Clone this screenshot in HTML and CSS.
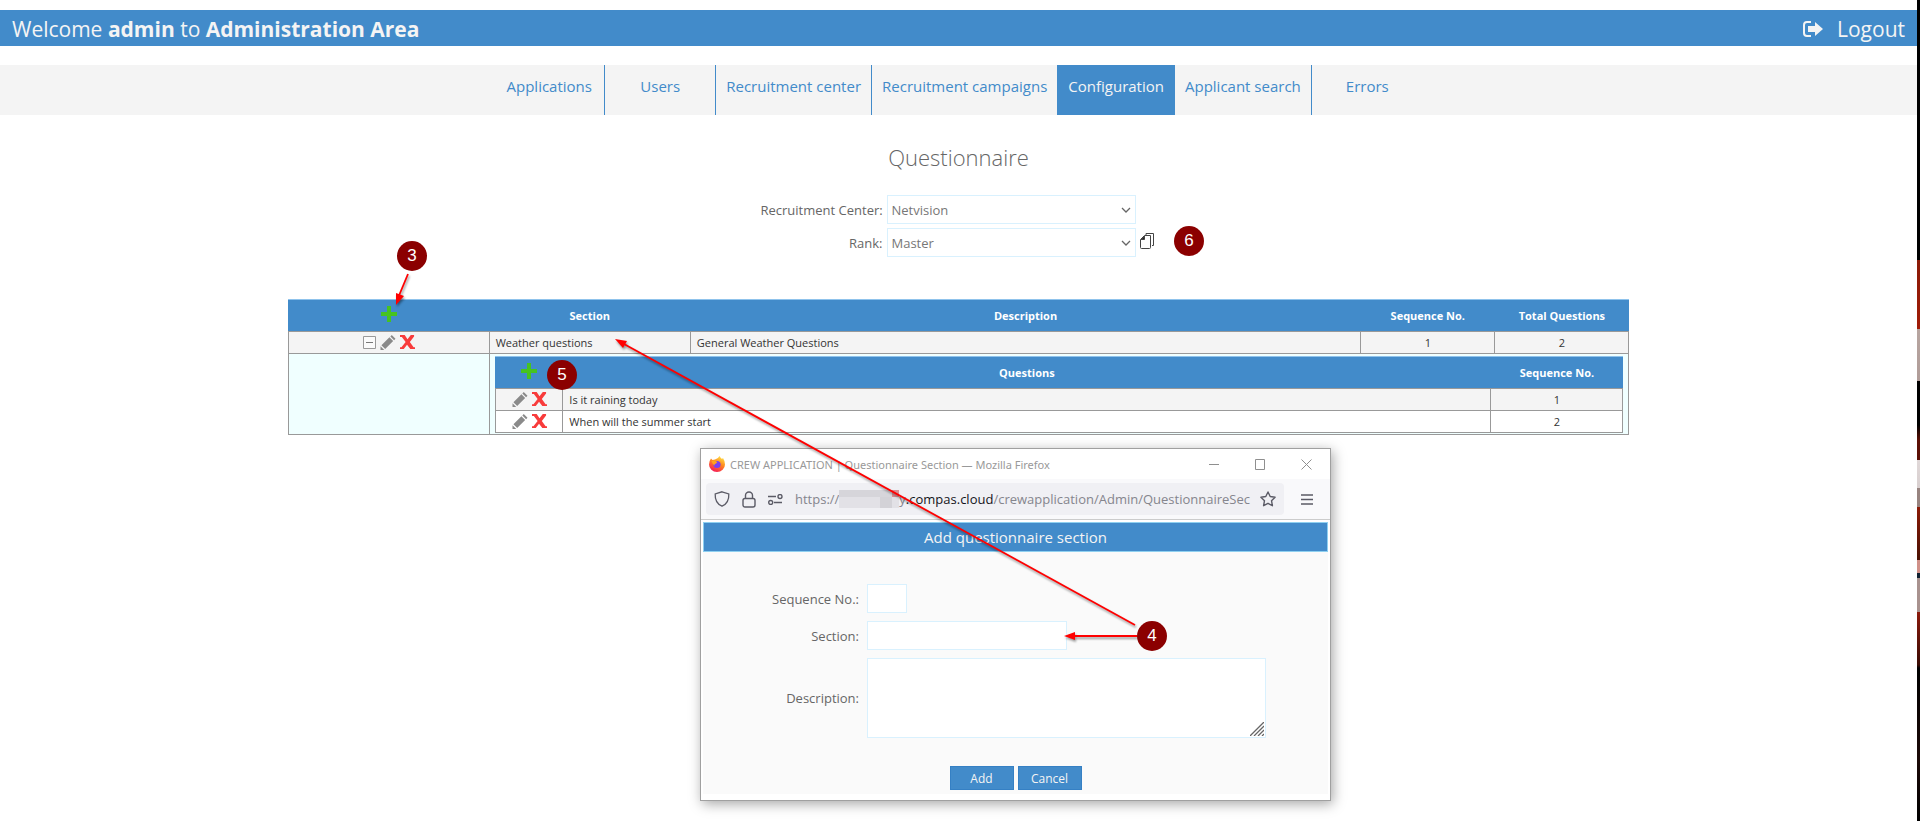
FILE: index.html
```html
<!DOCTYPE html>
<html lang="en">
<head>
    <meta charset="UTF-8">
    <meta name="viewport" content="width=device-width, initial-scale=1.0">
    <title>Questionnaire</title>
    <link rel="stylesheet" href="styles.css">
</head>
<body>
    <svg class="sprite" aria-hidden="true">
        <symbol id="plus" viewBox="0 0 16 16"><path d="M6 0h4v6h6v4h-6v6H6v-6H0V6h6z" fill="#46c320"/></symbol>
        <symbol id="pencil" viewBox="0 0 16 16"><path d="M0 16v-4l4 4zM1 11L9.500 2.500l4 4L5 15zM10.500 1.500L12 0l4 4-1.500 1.500z" fill="#8a8a8a"/></symbol>
        <symbol id="cross" viewBox="0 0 16 16"><path d="M0 0h5l3 4.500L11.500 0H15v1.500L10.500 7.500l4 5.500H16v2h-5L7.500 10.500 4 15H0v-2h1.500L6 7.500 2 2H0z" fill="#f83b3b"/></symbol>
        <symbol id="chevron" viewBox="0 0 10 6"><path d="M1 1l4 4 4-4" fill="none" stroke="#666" stroke-width="1.300"/></symbol>
    </svg>

    <div class="page">
        <header class="topbar">
            <div>Welcome <b>admin</b> to <b>Administration Area</b></div>
            <a class="logout" href="#">
                <svg width="20" height="16" viewBox="0 0 20 16"><path d="M8 1H4Q1 1 1 4v8q0 3 3 3h4" fill="none" stroke="#f4f4f4" stroke-width="2"/><path d="M5 5h7V1l8 7-8 7v-4H5z" fill="#f4f4f4"/></svg>
                Logout
            </a>
        </header>

        <nav class="menu">
            <a href="#">Applications</a>
            <a href="#">Users</a>
            <a href="#">Recruitment center</a>
            <a href="#">Recruitment campaigns</a>
            <a href="#" class="active">Configuration</a>
            <a href="#">Applicant search</a>
            <a href="#">Errors</a>
        </nav>

        <h1>Questionnaire</h1>

        <form class="filter">
            <label for="center">Recruitment Center:</label>
            <div class="select">
                <select id="center"><option>Netvision</option></select>
                <svg width="10" height="6"><use href="#chevron"/></svg>
            </div>
            <span></span>
            <label for="rank">Rank:</label>
            <div class="select">
                <select id="rank"><option>Master</option></select>
                <svg width="10" height="6"><use href="#chevron"/></svg>
            </div>
            <button type="button" class="icon copy" aria-label="Copy">
                <svg width="15" height="17" viewBox="0 0 15 17" fill="none" stroke="#444"><path d="M4.500 3.500h6v12q0 1-1 1h-8q-1 0-1-1v-8z"/><path d="M1 7.500L4.500 4v3.500z" fill="#222"/><path d="M6 3.500V1.500h7.500v12H12"/></svg>
            </button>
        </form>

        <table class="grid sections">
            <colgroup><col class="w15"><col class="w15"><col class="w50"><col class="w10"><col class="w10"></colgroup>
            <thead>
                <tr>
                    <th><button class="icon" aria-label="Add section"><svg width="16" height="16"><use href="#plus"/></svg></button></th>
                    <th>Section</th>
                    <th>Description</th>
                    <th>Sequence No.</th>
                    <th>Total Questions</th>
                </tr>
            </thead>
            <tbody>
                <tr class="odd">
                    <td>
                        <div class="actions">
                            <button class="icon" aria-label="Collapse"><svg width="13" height="13" fill="none"><path d="M.5.5h12v12H.5z" stroke="#999" fill="#fafafa"/><path d="M3 6.500h7" stroke="#777"/></svg></button>
                            <button class="icon" aria-label="Edit"><svg width="16" height="15"><use href="#pencil"/></svg></button>
                            <button class="icon" aria-label="Delete"><svg width="15" height="15"><use href="#cross"/></svg></button>
                        </div>
                    </td>
                    <td>Weather questions</td>
                    <td>General Weather Questions</td>
                    <td class="num">1</td>
                    <td class="num">2</td>
                </tr>
                <tr class="detail">
                    <td></td>
                    <td colspan="4" class="holder">
                        <table class="grid questions">
                            <colgroup><col class="w6"><col><col class="w12"></colgroup>
                            <thead>
                                <tr>
                                    <th><button class="icon" aria-label="Add question"><svg width="16" height="16"><use href="#plus"/></svg></button></th>
                                    <th>Questions</th>
                                    <th>Sequence No.</th>
                                </tr>
                            </thead>
                            <tbody>
                                <tr class="odd">
                                    <td>
                                        <div class="actions">
                                            <button class="icon" aria-label="Edit"><svg width="16" height="15"><use href="#pencil"/></svg></button>
                                            <button class="icon" aria-label="Delete"><svg width="15" height="15"><use href="#cross"/></svg></button>
                                        </div>
                                    </td>
                                    <td>Is it raining today</td>
                                    <td class="num">1</td>
                                </tr>
                                <tr>
                                    <td>
                                        <div class="actions">
                                            <button class="icon" aria-label="Edit"><svg width="16" height="15"><use href="#pencil"/></svg></button>
                                            <button class="icon" aria-label="Delete"><svg width="15" height="15"><use href="#cross"/></svg></button>
                                        </div>
                                    </td>
                                    <td>When will the summer start</td>
                                    <td class="num">2</td>
                                </tr>
                            </tbody>
                        </table>
                    </td>
                </tr>
            </tbody>
        </table>

        <!-- browser popup -->
        <section class="window">
            <div class="titlebar">
                <svg width="16" height="16" viewBox="0 0 16 16">
                    <defs>
                        <linearGradient id="fox" x1=".8" y1="0" x2=".3" y2="1"><stop offset="0" stop-color="#ffe84a"/><stop offset=".45" stop-color="#ff8a1e"/><stop offset="1" stop-color="#f5175a"/></linearGradient>
                    </defs>
                    <path d="M10.500 0q1 2 2.500 3l1-1q2 3 2 6.500a8 7.500 0 0 1-16 0Q0 5 2 2.500L3.500 4 6 3.500Q9 3 10.500 0z" fill="url(#fox)"/>
                    <circle cx="8" cy="8.500" r="3.600" fill="#7a3ff0"/>
                    <path d="M2.500 5q2.500-1 5 .5Q9 6.500 7 7.500q-2 .5-1.500 2-2-1-3-4.500z" fill="#ffa21f"/>
                </svg>
                <span class="caption">CREW APPLICATION | Questionnaire Section — Mozilla Firefox</span>
                <button class="icon" aria-label="Minimize"><svg width="10" height="11" stroke="#8f8f8f"><path d="M0 5.500h10"/></svg></button>
                <button class="icon" aria-label="Maximize"><svg width="10" height="11" stroke="#8f8f8f" fill="none"><path d="M.5.5h9v10h-9z"/></svg></button>
                <button class="icon" aria-label="Close"><svg width="11" height="11" stroke="#8f8f8f"><path d="M.5.5l10 10M10.500.5l-10 10"/></svg></button>
            </div>
            <div class="toolbar">
                <div class="address">
                    <svg width="16" height="16" viewBox="0 0 16 16" fill="none" stroke="#5b5b66" stroke-width="1.300"><path d="M8 .8l6.800 2.200q.5 9-6.800 12.200Q.7 12 1.200 3z"/></svg>
                    <svg width="14" height="17" viewBox="0 0 14 17" fill="none" stroke="#5b5b66" stroke-width="1.400"><rect x="1" y="7.500" width="12" height="8.500" rx="2"/><path d="M3.500 7.500V4.500a3.500 3.500 0 0 1 7 0v3"/></svg>
                    <svg width="15" height="11" viewBox="0 0 15 11" fill="none" stroke="#5b5b66" stroke-width="1.400"><path d="M0 2.500h8M6 8.500h8"/><circle cx="12" cy="2.500" r="2"/><circle cx="2.700" cy="8.500" r="2"/></svg>
                    <div class="url"><span>https://</span><svg width="60" height="18"><path d="M0 0h60v18H0z" fill="#e2e1e6"/><path d="M0 0h53v7H0z" fill="#d6d5da"/><path d="M41 7h12v11H41z" fill="#d3d2d7"/><path d="M53 0h7v7h-7z" fill="#dc8f94"/></svg><span>y</span><b>.compas.cloud</b><span>/crewapplication/Admin/QuestionnaireSec</span></div>
                    <button class="icon bookmark" aria-label="Bookmark"><svg width="16" height="16" viewBox="0 0 16 16" fill="none" stroke="#5b5b66" stroke-width="1.400" stroke-linejoin="round"><path d="M8 1l2.200 4.500 4.900.7-3.600 3.500.9 5L8 12.300l-4.400 2.400.9-5L.9 6.200l4.900-.7z"/></svg></button>
                </div>
                <button class="icon" aria-label="Menu"><svg width="12" height="11" stroke="#5b5b66" stroke-width="1.500"><path d="M0 1h12M0 5.500h12M0 10h12"/></svg></button>
            </div>
            <div class="content">
                <h2>Add questionnaire section</h2>
                <form>
                    <div class="fields">
                        <label for="seq">Sequence No.:</label>
                        <input id="seq" class="short" type="text">
                        <label for="section">Section:</label>
                        <input id="section" class="medium" type="text">
                        <label for="description">Description:</label>
                        <div class="area">
                            <textarea id="description"></textarea>
                            <svg width="14" height="14" stroke="#666" stroke-width="1.300"><path d="M0 14L14 0M4 14L14 4M8 14l6-6M12 14l2-2"/></svg>
                        </div>
                    </div>
                    <div class="buttons">
                        <button type="button">Add</button>
                        <button type="button">Cancel</button>
                    </div>
                </form>
            </div>
        </section>

        <!-- callouts -->
        <svg class="arrows" width="1200" height="700">
            <g stroke="red" stroke-width="1.800" fill="red">
                <path d="M408 274L398 298"/>
                <path d="M1135 625L624 344"/>
                <path d="M1137 636H1072"/>
                <g stroke="none">
                    <path d="M396 305l0-12 8 3z"/>
                    <path d="M615 339l12 2-4 7z"/>
                    <path d="M1064 636l11-4v8z"/>
                </g>
            </g>
        </svg>
        <span class="badge b3">3</span>
        <span class="badge b4">4</span>
        <span class="badge b5">5</span>
        <span class="badge b6">6</span>
    </div>
    <div class="edge"></div>
</body>
</html>
```
FILE: styles.css
```css
* {
    box-sizing: border-box;
}
body {
    margin: 0;
    display: flex;
    min-height: 100vh;
    background: #fff;
    font-family: "Open Sans", "Noto Sans", sans-serif;
    font-size: 13px;
    color: #666;
}
a {
    text-decoration: none;
}
svg {
    display: block;
    flex: none;
}
.sprite {
    position: absolute;
    width: 0;
    height: 0;
}
.page {
    position: relative;
    flex: 1;
    padding-top: 10px;
}
.edge {
    width: 3px;
    background: linear-gradient(#000 260px, #8a1a06 260px, #a11c08 329px, #b7a5a0 329px, #b09c98 381px, #000 381px, #000 425px, #5c1006 440px, #5c1006 460px, #e0d8d8 460px, #d8cfcf 488px, #97837f 488px, #97837f 507px, #8c1a06 507px, #4a1204 560px, #d09088 560px, #d09088 573px, #102030 573px, #102030 578px, #a8928e 578px, #a8928e 612px, #8c1a0c 612px, #3a0c04 665px, #000 668px, #1c0a08 760px, #000 821px);
}
.icon {
    padding: 0;
    border: 0;
    background: none;
    cursor: pointer;
}

/* header */
.topbar {
    display: flex;
    justify-content: space-between;
    align-items: center;
    height: 36px;
    padding: 2px 12px 0;
    background: #428bca;
    color: #f4f4f4;
    font-size: 21px;
}
.logout {
    display: flex;
    align-items: center;
    gap: 14px;
    color: #f4f4f4;
}

/* menu */
.menu {
    display: flex;
    justify-content: center;
    height: 50px;
    margin-top: 19px;
    background: #f4f4f4;
    font-size: 15px;
    line-height: 42px;
}
.menu a {
    min-width: 111px;
    padding: 0 10px;
    border-right: 1px solid #428bca;
    text-align: center;
    color: #428bca;
}
.menu a:last-child {
    border-right: 0;
}
.menu .active {
    background: #428bca;
    color: #f4f4f4;
}

h1 {
    margin: 27px 0 23px;
    font-size: 22px;
    font-weight: 300;
    line-height: 30px;
    text-align: center;
}

/* filter */
.filter {
    display: grid;
    grid-template-columns: 122px 249px 17px;
    justify-content: center;
    align-items: center;
    gap: 4px;
}
.copy {
    align-self: start;
    padding-top: 4px;
}
label {
    text-align: right;
    white-space: nowrap;
}
.select {
    position: relative;
}
.select svg {
    position: absolute;
    right: 5px;
    top: 12px;
    pointer-events: none;
}
select, input, textarea {
    display: block;
    height: 29px;
    border: 1px solid #d9f1fe;
    border-radius: 0;
    background: #fff;
    color: #777;
    font: inherit;
}
select {
    width: 100%;
    padding: 0 4px;
    appearance: none;
}

/* tables */
.grid {
    border-collapse: collapse;
    table-layout: fixed;
    font-size: 11px;
    color: #333;
}
.sections {
    width: 70%;
    margin: 42px auto 0;
}
.questions {
    width: 100%;
    background: #fff;
}
.w15 { width: 15%; }
.w50 { width: 50%; }
.w10 { width: 10%; }
.w6 { width: 6%; }
.w12 { width: 132px; }
.grid th {
    height: 32px;
    padding: 0;
    border-top: 1px solid #8fc3ec;
    background: #428bca;
    color: #fff;
}
.grid td {
    height: 22px;
    padding: 0 6px;
    border: 1px solid #999;
}
.grid .odd td {
    background: #f4f4f4;
}
.grid th svg {
    margin: auto;
}
.grid .num {
    text-align: center;
}
.actions {
    display: flex;
    justify-content: center;
    align-items: center;
    gap: 4px;
}
.grid .detail > td {
    background: #f0ffff;
}
.grid .holder {
    padding: 2px 5px 1px;
}

/* popup window */
.window {
    position: absolute;
    left: 700px;
    top: 448px;
    width: 631px;
    border: 1px solid #a0a0a0;
    background: #fff;
    box-shadow: 2px 3px 12px rgba(0, 0, 0, 0.35);
}
.titlebar {
    display: flex;
    align-items: center;
    gap: 36px;
    height: 30px;
    padding: 0 18px 0 8px;
    color: #999;
    font-family: "Noto Sans", sans-serif;
    font-size: 11px;
}
.caption {
    flex: 1;
    margin-left: -31px;
}
.toolbar {
    display: flex;
    align-items: center;
    gap: 17px;
    height: 41px;
    padding: 0 17px 0 5px;
    border-bottom: 1px solid #ccc;
    background: #f9f9fb;
}
.address {
    flex: 1;
    display: flex;
    align-items: center;
    gap: 12px;
    min-width: 0;
    height: 32px;
    padding: 0 8px;
    border-radius: 4px;
    background: #f0f0f4;
}
.url {
    flex: 1;
    display: flex;
    align-items: center;
    min-width: 0;
    white-space: nowrap;
    color: #85858d;
}
.url b {
    font-weight: normal;
    color: #15141a;
}
.bookmark {
    margin-left: -10px;
}
.content {
    margin: 2px 2px 6px;
    padding-bottom: 4px;
    background: #fafafa;
}
h2 {
    height: 30px;
    margin: 0;
    border: 1px solid #8fd0f0;
    background: #428bca;
    color: #f4f4f4;
    font-size: 15px;
    font-weight: normal;
    line-height: 28px;
    text-align: center;
}
.fields {
    display: grid;
    grid-template-columns: 156px 399px;
    align-items: center;
    gap: 8px;
    margin-top: 32px;
}
.short {
    width: 40px;
}
.medium {
    width: 200px;
}
.area {
    position: relative;
}
textarea {
    width: 100%;
    height: 80px;
    resize: none;
}
.area svg {
    position: absolute;
    right: 2px;
    bottom: 2px;
    pointer-events: none;
}
.buttons {
    display: flex;
    justify-content: center;
    gap: 4px;
    margin-top: 28px;
}
.buttons button {
    width: 64px;
    height: 24px;
    padding: 0;
    border: 1px solid #3580c4;
    background: #428bca;
    color: #f4f4f4;
    font: inherit;
    font-size: 12px;
}

/* callouts */
.arrows {
    position: absolute;
    left: 0;
    top: 0;
    pointer-events: none;
    filter: drop-shadow(1px 2px 1px rgba(0, 0, 0, 0.4));
}
.badge {
    position: absolute;
    width: 30px;
    height: 30px;
    border-radius: 50%;
    background: #8b0000;
    color: #fff;
    font: 17px/30px "Liberation Sans", Arial, sans-serif;
    text-align: center;
}
.b3 { left: 397px; top: 241px; }
.b4 { left: 1137px; top: 621px; }
.b5 { left: 547px; top: 360px; }
.b6 { left: 1174px; top: 226px; }
```
